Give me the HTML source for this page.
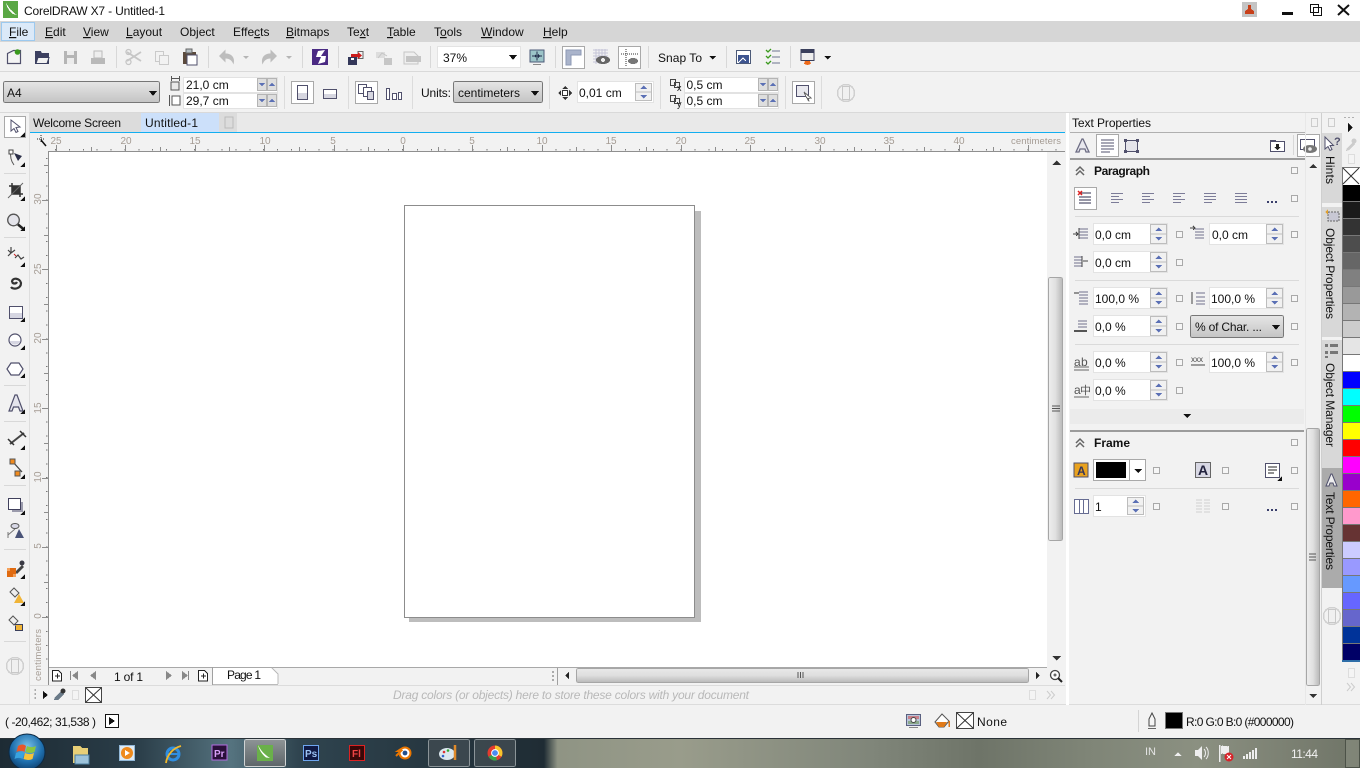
<!DOCTYPE html>
<html><head><meta charset="utf-8"><title>CorelDRAW X7</title>
<style>
html,body{margin:0;padding:0;background:#f2f2f2;overflow:hidden}
svg{display:block;position:absolute;left:0;top:0}
text{font-family:"Liberation Sans",sans-serif;font-size:12px;fill:#111}
.r{font-size:10px;fill:#a59c94}
.b{font-weight:bold}
.u{text-decoration:underline}
</style></head><body>
<svg width="1360" height="768" viewBox="0 0 1360 768" shape-rendering="crispEdges">
<defs>
<linearGradient id="gb" x1="0" y1="0" x2="0" y2="1"><stop offset="0" stop-color="#e6e6e6"/><stop offset="1" stop-color="#c4c4c4"/></linearGradient>
<linearGradient id="gv" x1="0" y1="0" x2="1" y2="0"><stop offset="0" stop-color="#eee"/><stop offset=".5" stop-color="#e0e0e0"/><stop offset="1" stop-color="#b8b8b8"/></linearGradient>
<linearGradient id="gh" x1="0" y1="0" x2="0" y2="1"><stop offset="0" stop-color="#e9e9e9"/><stop offset=".5" stop-color="#dedede"/><stop offset="1" stop-color="#b9b9b9"/></linearGradient>
<linearGradient id="tb" x1="0" y1="0" x2="1" y2="0">
<stop offset="0" stop-color="#1d2b34"/><stop offset=".1" stop-color="#2a3d48"/><stop offset=".17" stop-color="#55737f"/><stop offset=".22" stop-color="#2f444f"/><stop offset=".4" stop-color="#1f2c34"/><stop offset=".41" stop-color="#8f9484"/><stop offset=".5" stop-color="#999c8b"/><stop offset=".64" stop-color="#80867a"/><stop offset=".72" stop-color="#6e7468"/><stop offset=".8" stop-color="#7f8577"/><stop offset=".88" stop-color="#8b9081"/><stop offset="1" stop-color="#6f7467"/></linearGradient>
<radialGradient id="orb" cx=".5" cy=".35" r=".7"><stop offset="0" stop-color="#79c1e8"/><stop offset=".6" stop-color="#1e6fae"/><stop offset="1" stop-color="#0d3a66"/></radialGradient>
<linearGradient id="act" x1="0" y1="0" x2="0" y2="1"><stop offset="0" stop-color="#8e9496"/><stop offset="1" stop-color="#5d6569"/></linearGradient>
<g id="sp"><rect x=".5" y=".5" width="74" height="21" fill="#fff" stroke="#e3e3e3"/><rect x="57.500" y="1.500" width="16" height="19" fill="#f1f1f1" stroke="#bdbdbd"/><path d="M58 11h15" stroke="#bdbdbd"/><path d="M62 8l3.500-3.500 3.500 3.500z" fill="#5b70b5"/><path d="M62 14l3.500 3.500 3.500-3.500z" fill="#5b70b5"/></g>
<g id="cb"><rect x=".5" y=".5" width="6" height="6" fill="#f6f6f6" stroke="#a9a9a9"/></g>
<g id="ss"><rect x=".5" y=".5" width="94" height="15" fill="#fff" stroke="#e2e2e2"/><rect x="74.500" y="1.500" width="9" height="12" fill="#dedede" stroke="#b4b4b4"/><rect x="84.500" y="1.500" width="9" height="12" fill="#dedede" stroke="#b4b4b4"/><path d="M76 6l3 3.500 3-3.500z" fill="#5b70b5"/><path d="M86 9l3-3.500 3 3.500z" fill="#5b70b5"/></g>
<g id="tri"><path d="M0 0h8l-4 5z" fill="#111"/></g>
<g id="corn"><path d="M5 0v5h-5z" fill="#111"/></g>
<g id="ghost"><circle cx="9" cy="9" r="8.500" fill="none" stroke="#d0d0d0" stroke-width="1.500"/><rect x="5.500" y="2.500" width="7" height="13" fill="#f0f0f0" stroke="#c8c8c8"/></g>
<g id="al"><path d="M0 .5h12M0 3.500h8M0 6.500h12M0 9.500h8" stroke="#7c7c98" fill="none"/></g>
</defs>

<!-- chrome backgrounds -->
<rect width="1360" height="768" fill="#f2f2f2"/>
<rect width="1360" height="21" fill="#fff"/>
<rect y="21" width="1360" height="21" fill="#d6d6d6"/>
<rect y="71" width="1360" height="1" fill="#d9d9d9"/>
<rect y="112" width="1360" height="1" fill="#d9d9d9"/>
<rect x="30" y="113" width="1040" height="19" fill="#e9e9e9"/>
<rect x="30" y="113" width="111" height="19" fill="#dcdcdc"/>
<rect x="141" y="113" width="78" height="19" fill="#cce0fa"/>
<rect x="219" y="113" width="18" height="19" fill="#dcdcdc"/>
<rect x="225" y="117" width="8" height="11" fill="#dcdcdc" stroke="#bbb"/>
<rect x="30" y="132" width="1035" height="1" fill="#12aef0"/>
<rect x="29" y="113" width="1" height="592" fill="#dedede"/>

<!-- title -->
<path d="M3 1h15v17H3z" fill="#5aa845"/><path d="M6 3c3 5 6 9 11 12l-4-1C10 12 7 8 6 3z" fill="#fff"/>
<text x="24" y="15" textLength="141">CorelDRAW X7 - Untitled-1</text>
<rect x="1242" y="2" width="15" height="15" fill="#c4c4c4"/><path d="M1248 5h3v4l3 2v3h-9v-3l3-2z" fill="#c8401a"/>
<rect x="1282" y="12" width="11" height="3" fill="#111"/>
<path d="M1310.500 4.500h8v8h-8zM1313.500 7.500h8v8h-8z" fill="#fff" stroke="#111" stroke-width="1.200"/>
<path d="M1338 5l11 10M1349 5l-11 10" stroke="#111" stroke-width="2" shape-rendering="auto"/>

<!-- menu -->
<rect x="1.500" y="22.500" width="33" height="18" fill="#dbe9f8" stroke="#9cc9ef"/>
<text x="9" y="36"><tspan class="u">F</tspan>ile</text>
<text x="45" y="36"><tspan class="u">E</tspan>dit</text>
<text x="83" y="36"><tspan class="u">V</tspan>iew</text>
<text x="126" y="36"><tspan class="u">L</tspan>ayout</text>
<text x="180" y="36">Ob<tspan class="u">j</tspan>ect</text>
<text x="233" y="36">Effe<tspan class="u">c</tspan>ts</text>
<text x="286" y="36"><tspan class="u">B</tspan>itmaps</text>
<text x="347" y="36">Te<tspan class="u">x</tspan>t</text>
<text x="387" y="36"><tspan class="u">T</tspan>able</text>
<text x="434" y="36">T<tspan class="u">o</tspan>ols</text>
<text x="481" y="36"><tspan class="u">W</tspan>indow</text>
<text x="543" y="36"><tspan class="u">H</tspan>elp</text>

<!-- standard toolbar -->
<g fill="#d8d8d8">
<rect x="116" y="46" width="1" height="22"/><rect x="208" y="46" width="1" height="22"/><rect x="302" y="46" width="1" height="22"/><rect x="338" y="46" width="1" height="22"/><rect x="430" y="46" width="1" height="22"/><rect x="555" y="46" width="1" height="22"/><rect x="648" y="46" width="1" height="22"/><rect x="726" y="46" width="1" height="22"/><rect x="790" y="46" width="1" height="22"/>
</g>
<g shape-rendering="auto">
<path d="M7.500 63.500v-10l6-3h7v13z" fill="#f4f4f4" stroke="#50506c" stroke-width="1.200"/><circle cx="17.500" cy="52" r="2.800" fill="#3b9a1e"/>
<path d="M35.500 63.500v-12h5l1 2h7v10z" fill="#3c4060" stroke="#3c4060"/><path d="M36 63.500l2-6h11l-2 6z" fill="#f2f2f2" stroke="#3c4060"/>
<path d="M64 51h13v13H64z" fill="#b5b5b5"/><rect x="67" y="51" width="7" height="4" fill="#ececec"/><rect x="67" y="58" width="7" height="6" fill="#ececec"/>
<path d="M91 58h14v6H91z" fill="#b9b9b9"/><rect x="94" y="51" width="8" height="7" fill="#eee" stroke="#bbb"/>
<path d="M127 52l14 9M141 52l-14 9" stroke="#c6c6c6" stroke-width="1.800" fill="none"/><circle cx="128.500" cy="62" r="2.500" fill="none" stroke="#c6c6c6" stroke-width="1.300"/><circle cx="128.500" cy="52" r="2.500" fill="none" stroke="#c6c6c6" stroke-width="1.300"/>
<rect x="155.500" y="51.500" width="8" height="10" fill="#f2f2f2" stroke="#cacaca"/><rect x="159.500" y="55.500" width="9" height="9" fill="#f2f2f2" stroke="#cacaca"/>
<rect x="183" y="52" width="13" height="12" fill="#5b4a3c"/><rect x="187" y="55" width="10" height="10" fill="#fff" stroke="#50506c"/><rect x="186" y="49" width="6" height="4" fill="#b7c0c4" stroke="#666"/>
<path d="M219 56l6.500-6.500v4c6 0 10 4 8 11-1.500-4-4-6-8-6v4z" fill="#bdbdbd"/>
<path d="M243 56h6l-3 3z" fill="#b5b5b5"/>
<path d="M277 56l-6.500-6.500v4c-6 0-10 4-8 11 1.500-4 4-6 8-6v4z" fill="#bdbdbd"/>
<path d="M286 56h6l-3 3z" fill="#b5b5b5"/>
<rect x="312" y="49" width="16" height="16" fill="#4a2a83"/><path d="M325 50l-7 1-2 6h5l-3 7 7-2 1-6h-5z" fill="#fff"/>
<rect x="348" y="57" width="9" height="8" fill="#34385a"/><rect x="351" y="58" width="3" height="2" fill="#fff"/><path d="M358 51.500h5v7h-5z" fill="#f4f4f4" stroke="#666"/><path d="M351 54h7v-2l4 3.500-4 3.500v-2h-7z" fill="#cc1c1c"/>
<rect x="376" y="52" width="9" height="6" fill="#ddd"/><rect x="384" y="58" width="8" height="7" fill="#c6c6c6"/><path d="M378 58l4-5 5 3" fill="none" stroke="#c4c4c4"/>
<path d="M404 52h10l4 4v8h-14z" fill="#efefef" stroke="#c5c5c5"/><rect x="406" y="56" width="15" height="6" fill="#c5c5c5"/>
</g>
<rect x="437.500" y="46.500" width="83" height="21" fill="#fff" stroke="#e3e3e3"/>
<text x="443" y="62">37%</text><use href="#tri" x="509" y="55"/>
<rect x="530" y="50" width="14" height="12" fill="#9cc4c8" stroke="#4c5a78"/><path d="M532 56h10M537 51.500v9" stroke="#222c4a"/><path d="M534 56l2-2v4zM540 56l-2-2v4z" fill="#222c4a"/><path d="M533 64.500h8" stroke="#888"/>
<rect x="562.500" y="46.500" width="22" height="22" fill="#fff" stroke="#a9a9a9"/><path d="M566 50h15v5h-10v10h-5z" fill="#aab4cb" stroke="#8e9ab5"/>
<g stroke="#c4c4d8"><path d="M593 50h15M593 53h15M593 56h15M593 59h15M593 62h15M596 49v15M599 49v15M602 49v15M605 49v15"/></g><ellipse cx="603" cy="60" rx="7" ry="4" fill="#666"/><circle cx="603" cy="60" r="2" fill="#eee"/>
<rect x="618.500" y="46.500" width="22" height="22" fill="#fff" stroke="#a9a9a9"/><path d="M621 54h18M626 49v17" stroke="#333" stroke-dasharray="1 1"/><ellipse cx="633" cy="61" rx="5" ry="3" fill="#777"/>
<text x="658" y="62" textLength="44">Snap To</text>
<path d="M709 56h7l-3.500 3.500z" fill="#111"/>
<rect x="736.500" y="50.500" width="14" height="13" fill="#fff" stroke="#4c5a78"/><rect x="738" y="55" width="11" height="8" fill="#3e5590"/><path d="M738 63l5-5 3 3" stroke="#fff" fill="none"/>
<path d="M772 51h8M772 57h8M772 63h8" stroke="#6f7490"/><path d="M766 50l2 2 3-3M766 56l2 2 3-3M766 62l2 2 3-3" stroke="#3b9a1e" fill="none" stroke-width="1.300" shape-rendering="auto"/>
<rect x="801" y="49.500" width="13" height="11" fill="#eee" stroke="#3a3f5c"/><rect x="801" y="50" width="13" height="3" fill="#3a3f5c"/><path d="M805 61h5l1 3-3.500 1-3.500-1z" fill="#ee6a1a"/>
<path d="M824 56h7l-3.500 3.500z" fill="#111"/>

<!-- property bar -->
<g fill="#dcdcdc">
<rect x="284" y="76" width="1" height="33"/><rect x="348" y="76" width="1" height="33"/><rect x="412" y="76" width="1" height="33"/><rect x="549" y="76" width="1" height="33"/><rect x="660" y="76" width="1" height="33"/><rect x="785" y="76" width="1" height="33"/><rect x="821" y="76" width="1" height="33"/>
</g>
<rect x="3.500" y="81.500" width="156" height="21" rx="2" fill="url(#gb)" stroke="#777"/>
<text x="7" y="97">A4</text><use href="#tri" x="149" y="91"/>
<rect x="171" y="82" width="8" height="8" fill="#e8e8e8" stroke="#555"/><path d="M171.500 78.500h8M171.500 76v5M179.500 76v5" stroke="#555" fill="none"/>
<rect x="172" y="96" width="8" height="9" fill="#fff" stroke="#555"/><path d="M169.500 95v11" stroke="#555"/>
<use href="#ss" x="183" y="77"/><use href="#ss" x="183" y="93"/>
<text x="186" y="89">21,0 cm</text><text x="186" y="105">29,7 cm</text>
<rect x="291.500" y="81.500" width="22" height="22" fill="#fff" stroke="#a9a9a9"/><rect x="297.500" y="85.500" width="10" height="14" fill="#fff" stroke="#50506c"/><rect x="298" y="93" width="9" height="6" fill="#d6d6e0"/>
<rect x="323.500" y="89.500" width="13" height="9" fill="#fff" stroke="#50506c"/><rect x="324" y="94" width="12" height="4" fill="#d6d6e0"/>
<rect x="355.500" y="81.500" width="22" height="22" fill="#fff" stroke="#a9a9a9"/><rect x="358.500" y="84.500" width="8" height="9" fill="#fff" stroke="#50506c"/><rect x="363.500" y="87.500" width="8" height="9" fill="#fff" stroke="#50506c"/><rect x="367.500" y="91.500" width="6" height="8" fill="#d6d6e0" stroke="#50506c"/>
<rect x="386.500" y="88.500" width="3" height="11" fill="#fff" stroke="#50506c"/><rect x="392.500" y="93.500" width="4" height="6" fill="#fff" stroke="#50506c"/><rect x="398.500" y="92.500" width="3" height="7" fill="#fff" stroke="#50506c"/>
<text x="421" y="97" textLength="30">Units:</text>
<rect x="453.500" y="81.500" width="89" height="21" rx="2" fill="url(#gb)" stroke="#777"/>
<text x="458" y="97" textLength="62">centimeters</text><use href="#tri" x="531" y="91"/>
<path d="M565 86l3 3h-6zM565 100l3-3h-6zM558 93l3-3v6zM572 93l-3-3v6z" fill="#333"/><rect x="562.500" y="90.500" width="5" height="5" fill="#fff" stroke="#333"/>
<rect x="577.500" y="81.500" width="76" height="21" fill="#fff" stroke="#e3e3e3"/><rect x="635.500" y="83.500" width="16" height="17" fill="#f1f1f1" stroke="#bdbdbd"/><path d="M636 92h15" stroke="#bdbdbd"/><path d="M640 89l3.500-3.500 3.500 3.500zM640 95l3.500 3.500 3.500-3.500z" fill="#5b70b5"/>
<text x="579" y="97">0,01 cm</text>
<rect x="670.500" y="79.500" width="5" height="6" fill="none" stroke="#444"/><rect x="674.500" y="82.500" width="5" height="5" fill="none" stroke="#444"/>
<rect x="670.500" y="95.500" width="5" height="6" fill="none" stroke="#444"/><rect x="674.500" y="98.500" width="5" height="5" fill="none" stroke="#444"/>
<text x="677" y="91" style="font-size:9px">x</text><text x="677" y="107" style="font-size:9px">y</text>
<use href="#ss" x="684" y="77"/><use href="#ss" x="684" y="93"/>
<text x="686.500" y="89">0,5 cm</text><text x="686.500" y="105">0,5 cm</text>
<rect x="792.500" y="81.500" width="22" height="22" fill="#fff" stroke="#a9a9a9"/><rect x="796.500" y="85.500" width="12" height="11" fill="#e8e8ee" stroke="#50506c"/><path d="M804 92l7 6-3 .5 1 3-3-5z" fill="#fff" stroke="#666"/>
<use href="#ghost" x="837" y="84"/>

<!-- tabs -->
<text x="33" y="127" textLength="88">Welcome Screen</text>
<text x="145" y="127" textLength="53" fill="#223">Untitled-1</text>

<!-- rulers -->
<rect x="30" y="133" width="1035" height="18" fill="#f2f2f2"/>
<rect x="30" y="133" width="18" height="535" fill="#f2f2f2"/>
<rect x="48" y="151" width="999" height="516" fill="#fff"/>
<rect x="48" y="151" width="1017" height="1" fill="#8f8f8f"/>
<rect x="48" y="151" width="1" height="534" fill="#8f8f8f"/>
<path d="M403 149.500H54" stroke="#777" stroke-width="1.500" stroke-dasharray="1 12.880"/>
<path d="M403 149.500H1060" stroke="#777" stroke-width="1.500" stroke-dasharray="1 12.880"/>
<path d="M46.500 617V155" stroke="#777" stroke-width="1.500" stroke-dasharray="1 12.880"/>
<path d="M46.500 617V662" stroke="#777" stroke-width="1.500" stroke-dasharray="1 12.880"/>
<g fill="#8d8d8d">
<rect x="56" y="145" width="1" height="6"/><rect x="125" y="145" width="1" height="6"/><rect x="195" y="145" width="1" height="6"/><rect x="264" y="145" width="1" height="6"/><rect x="334" y="145" width="1" height="6"/><rect x="403" y="145" width="1" height="6"/><rect x="472" y="145" width="1" height="6"/><rect x="542" y="145" width="1" height="6"/><rect x="611" y="145" width="1" height="6"/><rect x="681" y="145" width="1" height="6"/><rect x="750" y="145" width="1" height="6"/><rect x="820" y="145" width="1" height="6"/><rect x="889" y="145" width="1" height="6"/><rect x="959" y="145" width="1" height="6"/><rect x="1028" y="145" width="1" height="6"/>
<rect x="91" y="147" width="1" height="4"/><rect x="160" y="147" width="1" height="4"/><rect x="229" y="147" width="1" height="4"/><rect x="299" y="147" width="1" height="4"/><rect x="368" y="147" width="1" height="4"/><rect x="438" y="147" width="1" height="4"/><rect x="507" y="147" width="1" height="4"/><rect x="576" y="147" width="1" height="4"/><rect x="646" y="147" width="1" height="4"/><rect x="715" y="147" width="1" height="4"/><rect x="785" y="147" width="1" height="4"/><rect x="854" y="147" width="1" height="4"/><rect x="924" y="147" width="1" height="4"/><rect x="993" y="147" width="1" height="4"/>
<rect x="42" y="200" width="6" height="1"/><rect x="42" y="269" width="6" height="1"/><rect x="42" y="339" width="6" height="1"/><rect x="42" y="408" width="6" height="1"/><rect x="42" y="478" width="6" height="1"/><rect x="42" y="547" width="6" height="1"/><rect x="42" y="617" width="6" height="1"/>
<rect x="44" y="165" width="4" height="1"/><rect x="44" y="235" width="4" height="1"/><rect x="44" y="304" width="4" height="1"/><rect x="44" y="373" width="4" height="1"/><rect x="44" y="443" width="4" height="1"/><rect x="44" y="512" width="4" height="1"/><rect x="44" y="582" width="4" height="1"/>
</g>
<g text-anchor="middle">
<text class="r" x="56" y="144">25</text><text class="r" x="126" y="144">20</text><text class="r" x="195" y="144">15</text><text class="r" x="265" y="144">10</text><text class="r" x="333" y="144">5</text><text class="r" x="403" y="144">0</text><text class="r" x="472" y="144">5</text><text class="r" x="542" y="144">10</text><text class="r" x="611" y="144">15</text><text class="r" x="681" y="144">20</text><text class="r" x="750" y="144">25</text><text class="r" x="820" y="144">30</text><text class="r" x="889" y="144">35</text><text class="r" x="959" y="144">40</text>
</g>
<text class="r" x="1011" y="144" textLength="50" style="font-size:9.500px">centimeters</text>
<g text-anchor="middle">
<text class="r" transform="translate(41 199) rotate(-90)">30</text><text class="r" transform="translate(41 269) rotate(-90)">25</text><text class="r" transform="translate(41 338) rotate(-90)">20</text><text class="r" transform="translate(41 408) rotate(-90)">15</text><text class="r" transform="translate(41 477) rotate(-90)">10</text><text class="r" transform="translate(41 546) rotate(-90)">5</text><text class="r" transform="translate(41 616) rotate(-90)">0</text>
</g>
<text class="r" transform="translate(41 681) rotate(-90)" textLength="52" style="font-size:9.500px">centimeters</text>
<path d="M37 139h8M41 135v8" stroke="#222" stroke-dasharray="1 1"/><path d="M41 140l5 6" stroke="#111" stroke-width="1.500" shape-rendering="auto"/>

<!-- page -->
<rect x="409" y="211" width="292" height="411" fill="#bdbdbd"/>
<rect x="404.500" y="205.500" width="290" height="412" fill="#fff" stroke="#8c8c8c"/>

<!-- canvas v-scroll -->
<rect x="1047" y="152" width="18" height="516" fill="#f2f2f2"/>
<path d="M1052 165l4.500-4.500 4.500 4.500z" fill="#333"/>
<rect x="1048.500" y="277.500" width="14" height="263" rx="2" fill="url(#gv)" stroke="#a6a6a6"/>
<path d="M1052 406h8M1052 408.500h8M1052 411h8" stroke="#555"/>
<path d="M1052 656l4.500 4.500 4.500-4.500z" fill="#333"/>

<!-- bottom nav -->
<rect x="49" y="668" width="1016" height="17" fill="#f2f2f2"/>
<rect x="49" y="667" width="998" height="1" fill="#a8a8a8"/>
<path d="M52.500 670.500h6l3 3v7.500h-9z" fill="#fff" stroke="#222"/><path d="M55 676h5M57.500 673.500v5" stroke="#222"/>
<rect x="70" y="671" width="1" height="9" fill="#888"/><path d="M78 671v9l-6-4.500z" fill="#888"/>
<path d="M96 671v9l-6-4.500z" fill="#888"/>
<text x="114" y="681" textLength="29">1 of 1</text>
<path d="M166 671v9l6-4.500z" fill="#888"/>
<path d="M182 671v9l6-4.500z" fill="#888"/><rect x="188" y="671" width="1" height="9" fill="#888"/>
<path d="M198.500 670.500h6l3 3v7.500h-9z" fill="#fff" stroke="#222"/><path d="M201 676h5M203.500 673.500v5" stroke="#222"/>
<rect x="212" y="667" width="1" height="18" fill="#a0a0a0"/>
<path d="M213 668h59l6 6v10h-65z" fill="#fff"/><path d="M272 668l6 6v10" fill="none" stroke="#bbb"/><path d="M213 684.500h65" stroke="#bbb"/>
<text x="227" y="679" textLength="34">Page 1</text>
<path d="M553 671v2M553 675v2M553 679v2" stroke="#aaa" stroke-width="2"/>
<rect x="557" y="668" width="1" height="17" fill="#a0a0a0"/>
<path d="M569 672v7l-4-3.500z" fill="#222"/>
<rect x="576.500" y="668.500" width="452" height="14" rx="2" fill="url(#gh)" stroke="#a6a6a6"/>
<path d="M798 672v6M800.500 672v6M803 672v6" stroke="#555"/>
<path d="M1036 672v7l4-3.500z" fill="#222"/>
<circle cx="1055" cy="675" r="4.500" fill="#fff" stroke="#444" stroke-width="1.300" shape-rendering="auto"/><circle cx="1055" cy="675" r="1.500" fill="#666" shape-rendering="auto"/><path d="M1058 678l4 4" stroke="#222" stroke-width="2" shape-rendering="auto"/>

<!-- doc palette -->
<rect x="30" y="685" width="1035" height="1" fill="#dcdcdc"/>
<rect y="704" width="1360" height="1" fill="#dcdcdc"/>
<path d="M35 689v2M35 693v2M35 697v2" stroke="#aaa" stroke-width="1.500"/>
<path d="M43 691v8l5-4z" fill="#111"/>
<path d="M54 700l1-3 6-6 3 3-6 6z" fill="#6a7a88"/><circle cx="63" cy="691" r="2.500" fill="#333" shape-rendering="auto"/>
<rect x="72.500" y="690.500" width="6" height="9" fill="#f4f4f4" stroke="#ddd"/>
<rect x="85.500" y="687.500" width="16" height="15" fill="#fff" stroke="#444"/><path d="M86 688l15 14M101 688l-15 14" stroke="#333" shape-rendering="auto"/>
<text x="393" y="699" textLength="356" font-style="italic" style="fill:#b8b8b8">Drag colors (or objects) here to store these colors with your document</text>
<rect x="1029.500" y="690.500" width="6" height="9" fill="#f4f4f4" stroke="#ddd"/>
<path d="M1047 691l3.500 4-3.500 4M1051 691l3.500 4-3.500 4" fill="none" stroke="#ccc" shape-rendering="auto"/>

<!-- white gutter -->
<rect x="1066" y="113" width="3" height="592" fill="#fff"/>

<!-- status -->
<text x="5" y="726" textLength="91">( -20,462; 31,538 )</text>
<rect x="105.500" y="714.500" width="13" height="13" fill="#fff" stroke="#111"/><path d="M109 717v8l6-4z" fill="#111"/>
<rect x="906.500" y="714.500" width="14" height="11" fill="#b8c4d8" stroke="#5a6080"/><rect x="908" y="716" width="11" height="3" fill="#c9808a"/><rect x="908" y="721" width="11" height="3" fill="#8aa88a"/><circle cx="913.500" cy="720" r="2.500" fill="#fff" stroke="#444" shape-rendering="auto"/><path d="M909 727.500h9" stroke="#888"/>
<path d="M935 722l7-8 7 7-5 6h-5z" fill="#fff" stroke="#555" shape-rendering="auto"/><path d="M936 722h11l-3 5h-5z" fill="#e07a1a" shape-rendering="auto"/><path d="M949 721v6" stroke="#e07a1a" stroke-width="1.500"/>
<rect x="956.500" y="712.500" width="17" height="16" fill="#fff" stroke="#444"/><path d="M957 713l16 15M973 713l-16 15" stroke="#333" shape-rendering="auto"/>
<text x="977" y="726" textLength="30">None</text>
<rect x="1138" y="710" width="1" height="22" fill="#d4d4d4"/>
<path d="M1152 713l3 6v7h-6v-7z" fill="#f4f4f4" stroke="#444" shape-rendering="auto"/><path d="M1148 728.500h8" stroke="#666"/>
<rect x="1165.500" y="712.500" width="17" height="16" fill="#000" stroke="#777"/>
<text x="1186" y="726" textLength="108">R:0 G:0 B:0 (#000000)</text>

<!-- left toolbox -->
<rect x="4.500" y="116.500" width="21" height="21" fill="#fff" stroke="#a9a9a9"/>
<g shape-rendering="auto">
<path d="M11 120v11l3-2.500 2 4 2-1-2-4 4-.5z" fill="#fff" stroke="#50506c"/>
<path d="M11 151c-1 5 0 10 3 14" fill="none" stroke="#555"/><rect x="9" y="150" width="4" height="4" fill="#fff" stroke="#444"/><path d="M14 153l8 3-4 5z" fill="#2b2f48"/>
<path d="M12 183v11h11M9 186h11v11" fill="none" stroke="#333" stroke-width="1.500"/><rect x="12" y="186" width="8" height="8" fill="#333"/><path d="M8 198l15-15" stroke="#666"/>
<circle cx="13.500" cy="220" r="5.800" fill="#e4e4ea" stroke="#555" stroke-width="1.300"/><path d="M18 224.500l6 5" stroke="#222" stroke-width="2.500"/>
<path d="M8 250l3 3M11 253l-3 3M11 247v6M11 253l4-3M15 258l3-3 3 4 3-2" fill="none" stroke="#444" stroke-width="1.200"/><path d="M14 254l2 2" stroke="#c22"/>
<path d="M12 282c0-5 8-4 9 1 0 6-8 7-10 4M12 282c1 2 4 2 5 0" fill="none" stroke="#333" stroke-width="2.200"/>
</g>
<rect x="9.500" y="306.500" width="13" height="12" fill="#fff" stroke="#50506c"/><rect x="10" y="313" width="12" height="5" fill="#d6d6e2"/>
<g shape-rendering="auto">
<circle cx="15" cy="340" r="6" fill="#fff" stroke="#50506c" stroke-width="1.200"/><path d="M9.500 341h11a6 6 0 0 1-11 0z" fill="#d6d6e2"/>
<path d="M11 363h8l4 6-4 6h-8l-4-6z" fill="#fff" stroke="#50506c" stroke-width="1.200"/>
<path d="M15 395l-6 16h3l1.500-4h5l1.500 4h3l-6-16z" fill="#e4e4ec" stroke="#50506c" stroke-width="1.200"/>
<path d="M10 444l14-11" stroke="#444" stroke-width="2"/><path d="M8 439l6 6M20 431l6 6" stroke="#333" stroke-width="1.500"/>
<path d="M13 462l9 10" stroke="#444" stroke-width="1.300"/>
</g>
<rect x="10" y="459" width="5" height="5" fill="#f08a1e" stroke="#555"/><rect x="15" y="471" width="5" height="5" fill="#f08a1e" stroke="#555"/>
<rect x="8.500" y="498.500" width="12" height="11" fill="#fff" stroke="#40405c"/><path d="M21 502h2v10H12v-2h9z" fill="#9b9bac"/>
<g shape-rendering="auto">
<ellipse cx="15" cy="526" rx="4" ry="2.500" fill="#d8d8e6" stroke="#555"/><path d="M8 535l7-6M8 532v6" stroke="#777" fill="none"/><path d="M19 529l-4 9h9z" fill="#4a5478"/>
<path d="M15 572l7-7 2 2-7 7z" fill="#444"/><circle cx="22" cy="563" r="2.500" fill="#3a3a44"/>
</g>
<rect x="7" y="568" width="9" height="9" fill="#e06a10"/><rect x="7" y="568" width="3" height="3" fill="#f4a05a"/><rect x="13" y="574" width="3" height="3" fill="#f4a05a"/>
<g shape-rendering="auto">
<path d="M10 592l4-4 5 5-4 4z" fill="#eee" stroke="#555"/><path d="M19 594l-5 9h10z" fill="#f0b436"/>
<path d="M9 620l4-4 5 5-4 4z" fill="#eee" stroke="#555"/>
</g>
<path d="M14.500 624.500h8v6h-7v-5" fill="#f0b436" stroke="#3a3f5c"/>
<g fill="#111"><use href="#corn" x="20" y="132"/><use href="#corn" x="20" y="162"/><use href="#corn" x="20" y="196"/><use href="#corn" x="20" y="226"/><use href="#corn" x="20" y="262"/><use href="#corn" x="20" y="317"/><use href="#corn" x="20" y="345"/><use href="#corn" x="20" y="373"/><use href="#corn" x="20" y="409"/><use href="#corn" x="20" y="445"/><use href="#corn" x="20" y="474"/><use href="#corn" x="20" y="510"/><use href="#corn" x="20" y="574"/><use href="#corn" x="20" y="601"/></g>
<g fill="#d8d8d8"><rect x="4" y="173" width="22" height="1"/><rect x="4" y="237" width="22" height="1"/><rect x="4" y="385" width="22" height="1"/><rect x="4" y="421" width="22" height="1"/><rect x="4" y="485" width="22" height="1"/><rect x="4" y="549" width="22" height="1"/><rect x="4" y="641" width="22" height="1"/></g>
<use href="#ghost" x="6" y="657"/>

<!-- docker -->
<text x="1072" y="127" textLength="79">Text Properties</text>
<rect x="1311.500" y="118.500" width="6" height="8" fill="#f2f2f2" stroke="#ccc"/><rect x="1328.500" y="118.500" width="6" height="8" fill="#f2f2f2" stroke="#ccc"/>
<rect x="1070" y="132" width="236" height="1" fill="#b0b0b0"/>
<rect x="1070" y="158" width="235" height="2" fill="#9c9c9c"/>
<path d="M1082 139l-6 13h3l1-3h5l1 3h3l-6-13z" fill="#e8e8ee" stroke="#6d6d84" stroke-width="1.300" shape-rendering="auto"/>
<rect x="1096.500" y="134.500" width="22" height="22" fill="#fff" stroke="#a9a9a9"/><path d="M1101 140h13M1101 143h13M1101 146h13M1101 149h13M1101 152h9" stroke="#50506c"/>
<rect x="1125.500" y="140.500" width="12" height="11" fill="#e4e4ea" stroke="#50506c"/><g fill="#50506c"><rect x="1124" y="139" width="3" height="3"/><rect x="1136" y="139" width="3" height="3"/><rect x="1124" y="150" width="3" height="3"/><rect x="1136" y="150" width="3" height="3"/></g>
<path d="M1270.500 141.500h14v10h-14z" fill="#fff" stroke="#50506c"/><path d="M1270 140h6v2h-6z" fill="#50506c"/><path d="M1276 144h3v3h2l-3.500 3-3.500-3h2z" fill="#222"/>
<rect x="1293" y="135" width="1" height="20" fill="#d8d8d8"/>
<rect x="1297.500" y="134.500" width="22" height="22" fill="#fff" stroke="#a9a9a9"/><rect x="1300.500" y="139.500" width="14" height="10" fill="#fff" stroke="#50506c"/><ellipse cx="1310" cy="149" rx="7" ry="4" fill="#777" shape-rendering="auto"/><circle cx="1310" cy="149" r="1.800" fill="#eee" shape-rendering="auto"/>

<!-- section chevron -->
<path d="M1076 171l4-4 4 4M1076 175l4-4 4 4" fill="none" stroke="#666" stroke-width="1.500" shape-rendering="auto"/>
<text class="b" x="1094" y="175" textLength="56">Paragraph</text>
<use href="#cb" x="1291" y="167"/>
<rect x="1074.500" y="187.500" width="22" height="22" fill="#fff" stroke="#a9a9a9"/><path d="M1079 193h12M1079 197h12M1079 200h12M1079 203h12" stroke="#2e2e4e"/><path d="M1078 191l4 4M1082 191l-4 4" stroke="#d22" stroke-width="1.500" shape-rendering="auto"/>
<use href="#al" x="1111" y="193"/><use href="#al" x="1142" y="193"/><use href="#al" x="1173" y="193"/>
<path d="M1204 193.500h12M1204 196.500h12M1204 199.500h12M1204 202.500h8" stroke="#7c7c98"/>
<path d="M1235 193.500h12M1235 196.500h12M1235 199.500h12M1235 202.500h12" stroke="#7c7c98"/>
<path d="M1267 201h2v2h-2zM1271 201h2v2h-2zM1275 201h2v2h-2z" fill="#3a3f6c"/>
<use href="#cb" x="1291" y="195"/>
<rect x="1075" y="216" width="224" height="1" fill="#dadada"/>
<rect x="1075" y="280" width="224" height="1" fill="#dadada"/>
<rect x="1075" y="344" width="224" height="1" fill="#dadada"/>

<!-- fields -->
<use href="#sp" x="1093" y="223"/><use href="#sp" x="1209" y="223"/>
<use href="#sp" x="1093" y="251"/>
<use href="#sp" x="1093" y="287"/><use href="#sp" x="1209" y="287"/>
<use href="#sp" x="1093" y="315"/>
<use href="#sp" x="1093" y="351"/><use href="#sp" x="1209" y="351"/>
<use href="#sp" x="1093" y="379"/>
<text x="1095" y="239">0,0 cm</text><text x="1212" y="239">0,0 cm</text><text x="1095" y="267">0,0 cm</text>
<text x="1095" y="303">100,0 %</text><text x="1211" y="303">100,0 %</text><text x="1095" y="331">0,0 %</text>
<text x="1095" y="367">0,0 %</text><text x="1211" y="367">100,0 %</text><text x="1095" y="395">0,0 %</text>
<rect x="1190.500" y="315.500" width="93" height="22" rx="2" fill="url(#gb)" stroke="#777"/>
<text x="1195" y="331" textLength="67">% of Char. ...</text><use href="#tri" x="1272" y="325"/>
<use href="#cb" x="1176" y="231"/><use href="#cb" x="1291" y="231"/><use href="#cb" x="1176" y="259"/><use href="#cb" x="1176" y="295"/><use href="#cb" x="1291" y="295"/><use href="#cb" x="1176" y="323"/><use href="#cb" x="1291" y="323"/><use href="#cb" x="1176" y="359"/><use href="#cb" x="1291" y="359"/><use href="#cb" x="1176" y="387"/>
<path d="M1079 229h9M1079 232h9M1079 235h9M1079 238h9" stroke="#70708c"/><path d="M1073 234h5M1076 232l2 2-2 2" fill="none" stroke="#444"/><path d="M1079 228v11" stroke="#444"/>
<path d="M1195 229h9M1195 232h9M1195 235h9M1195 238h9" stroke="#70708c"/><path d="M1190 228h5M1193 226l2 2-2 2" fill="none" stroke="#444"/>
<path d="M1074 257h8M1074 260h8M1074 263h8M1074 266h8" stroke="#70708c"/><path d="M1082 256v11" stroke="#444"/><path d="M1083 261h5" stroke="#444"/>
<path d="M1079 292h9M1079 295h9M1079 298h9M1079 301h9M1079 304h9" stroke="#70708c"/><path d="M1074 293h5" stroke="#333"/>
<path d="M1196 293h9M1196 297h9M1196 301h9M1196 304h9" stroke="#70708c"/><path d="M1192 292v12" stroke="#444"/>
<path d="M1078 321h9M1078 324h9M1078 327h9" stroke="#70708c"/><path d="M1074 331h13" stroke="#555" stroke-width="2"/>
<text x="1074" y="366" style="font-size:12px;fill:#555">a</text><text x="1081" y="366" style="font-size:12px;fill:#555">b</text><path d="M1074 367h15M1074 370h15" stroke="#666"/>
<text x="1191" y="362" style="font-size:8px;fill:#444">xxx</text><path d="M1191 365h14" stroke="#444"/>
<text x="1074" y="394" style="font-size:12px;fill:#555">a</text><text x="1080" y="394" style="font-size:11px;fill:#555;font-family:'Liberation Sans','Noto Sans CJK SC',sans-serif">中</text><path d="M1074 397h15" stroke="#666"/>
<rect x="1070" y="409" width="234" height="15" fill="#ebebeb"/>
<path d="M1183 414h8l-4 4z" fill="#111"/>
<rect x="1070" y="430" width="234" height="2" fill="#9c9c9c"/>
<path d="M1076 443l4-4 4 4M1076 447l4-4 4 4" fill="none" stroke="#666" stroke-width="1.500" shape-rendering="auto"/>
<text class="b" x="1094" y="447">Frame</text>
<use href="#cb" x="1291" y="439"/>
<rect x="1074" y="463" width="14" height="14" fill="#e9a21f" stroke="#50506c"/><text class="b" x="1077" y="475" style="fill:#36365a">A</text>
<rect x="1093.500" y="459.500" width="52" height="21" fill="#fff" stroke="#a9a9a9"/><rect x="1096" y="462" width="30" height="16" fill="#000"/><rect x="1129" y="460" width="1" height="21" fill="#a9a9a9"/><path d="M1134 469h8l-4 4z" fill="#111"/>
<use href="#cb" x="1153" y="467"/><use href="#cb" x="1222" y="467"/><use href="#cb" x="1291" y="467"/>
<rect x="1195.500" y="462.500" width="15" height="15" fill="#d8d8e4" stroke="#666"/><text class="b" x="1198" y="475" style="font-size:14px;fill:#22223e">A</text>
<rect x="1265.500" y="463.500" width="14" height="14" fill="#fff" stroke="#50506c"/><path d="M1268 467h9M1268 470h9M1268 473h6" stroke="#222"/><path d="M1282 476v5h-5z" fill="#111"/>
<rect x="1075" y="488" width="224" height="1" fill="#dadada"/>
<rect x="1074.500" y="499.500" width="14" height="14" fill="#fff" stroke="#666c92"/><path d="M1079.500 499v15M1083.500 499v15" stroke="#666c92"/>
<rect x="1093.500" y="495.500" width="52" height="21" fill="#fff" stroke="#e3e3e3"/><rect x="1127.500" y="497.500" width="16" height="17" fill="#f1f1f1" stroke="#bdbdbd"/><path d="M1128 506h15" stroke="#bdbdbd"/><path d="M1132 503l3.500-3.500 3.500 3.500zM1132 509l3.500 3.500 3.500-3.500z" fill="#5b70b5"/>
<text x="1095" y="511">1</text>
<use href="#cb" x="1153" y="503"/><use href="#cb" x="1222" y="503"/><use href="#cb" x="1291" y="503"/>
<path d="M1196 500h6M1196 503h6M1196 506h6M1196 509h6M1196 512h6M1204 500h6M1204 503h6M1204 506h6M1204 509h6M1204 512h6" stroke="#d0d0d0"/>
<path d="M1267 509h2v2h-2zM1271 509h2v2h-2zM1275 509h2v2h-2z" fill="#3a3f6c"/>

<!-- docker scrollbar -->
<path d="M1309 168l4-4 4 4z" fill="#333"/>
<rect x="1306.500" y="428.500" width="13" height="257" rx="2" fill="url(#gv)" stroke="#a6a6a6"/>
<path d="M1309 554h7M1309 557h7M1309 560h7" stroke="#555"/>
<path d="M1309 694h8l-4 4z" fill="#333"/>
<rect x="1305" y="113" width="1" height="592" fill="#e8e8e8"/>

<!-- vertical tabs -->
<rect x="1321" y="113" width="1" height="592" fill="#cfcfcf"/>
<rect x="1322" y="133" width="20" height="70" fill="#d8d8d8"/>
<rect x="1322" y="207" width="20" height="130" fill="#d8d8d8"/>
<rect x="1322" y="340" width="20" height="128" fill="#d8d8d8"/>
<rect x="1322" y="468" width="20" height="120" fill="#ababab"/>
<text transform="translate(1326 156) rotate(90)" textLength="28">Hints</text>
<text transform="translate(1326 228) rotate(90)" textLength="91">Object Properties</text>
<text transform="translate(1326 363) rotate(90)" textLength="84">Object Manager</text>
<text transform="translate(1326 492) rotate(90)" textLength="78">Text Properties</text>
<path d="M1325 137v12l3-2.500 2 4 2-1-2-4h3.500z" fill="#fff" stroke="#50506c" shape-rendering="auto"/><text class="b" x="1334" y="145" style="font-size:11px;fill:#50506c">?</text>
<rect x="1328" y="212" width="11" height="9" fill="#c8c8d4" stroke="#666" stroke-dasharray="2 1"/><path d="M1325 212l3-3v6z" fill="#e0a030"/>
<path d="M1325 344h3v3h-3zM1330 344h8v3h-8zM1325 351h3v3h-3zM1330 351h8v3h-8zM1325 356h3v2h-3z" fill="#777"/>
<path d="M1331 474l-5 12h3l1-3h3l1 3h3l-5-12z" fill="#eee" stroke="#50506c" shape-rendering="auto"/>
<use href="#ghost" x="1323" y="607"/>

<!-- color palette -->
<path d="M1344 117.500h2M1348 117.500h2M1352 117.500h2" stroke="#b0b0b0"/>
<path d="M1348 123v9l5-4.500z" fill="#111"/>
<path d="M1346 151l1-3 6-6 2 2-6 6z" fill="#ccc"/><circle cx="1354" cy="141" r="2.500" fill="#ccc" shape-rendering="auto"/>
<rect x="1348.500" y="154.500" width="6" height="9" fill="#f4f4f4" stroke="#ddd"/>
<rect x="1342" y="167" width="18" height="494" fill="#777"/>
<rect x="1343" y="168" width="17" height="17" fill="#fff"/><path d="M1343 168l16 16M1359 168l-16 16" stroke="#333" shape-rendering="auto"/>
<g>
<rect x="1343" y="185" width="17" height="16" fill="#000"/><rect x="1343" y="202" width="17" height="16" fill="#1a1a1a"/><rect x="1343" y="219" width="17" height="16" fill="#333"/><rect x="1343" y="236" width="17" height="16" fill="#4d4d4d"/><rect x="1343" y="253" width="17" height="16" fill="#666"/><rect x="1343" y="270" width="17" height="16" fill="#808080"/><rect x="1343" y="287" width="17" height="16" fill="#999"/><rect x="1343" y="304" width="17" height="16" fill="#b3b3b3"/><rect x="1343" y="321" width="17" height="16" fill="#ccc"/><rect x="1343" y="338" width="17" height="16" fill="#e5e5e5"/><rect x="1343" y="355" width="17" height="16" fill="#fff"/><rect x="1343" y="372" width="17" height="16" fill="#00f"/><rect x="1343" y="389" width="17" height="16" fill="#0ff"/><rect x="1343" y="406" width="17" height="16" fill="#0f0"/><rect x="1343" y="423" width="17" height="16" fill="#ff0"/><rect x="1343" y="440" width="17" height="16" fill="#f00"/><rect x="1343" y="457" width="17" height="16" fill="#f0f"/><rect x="1343" y="474" width="17" height="16" fill="#90c"/><rect x="1343" y="491" width="17" height="16" fill="#f60"/><rect x="1343" y="508" width="17" height="16" fill="#f9c"/><rect x="1343" y="525" width="17" height="16" fill="#633"/><rect x="1343" y="542" width="17" height="16" fill="#ccf"/><rect x="1343" y="559" width="17" height="16" fill="#99f"/><rect x="1343" y="576" width="17" height="16" fill="#69f"/><rect x="1343" y="593" width="17" height="16" fill="#66f"/><rect x="1343" y="610" width="17" height="16" fill="#66c"/><rect x="1343" y="627" width="17" height="16" fill="#039"/><rect x="1343" y="644" width="17" height="16" fill="#006"/>
</g>
<rect x="1342" y="660" width="18" height="2" fill="#2e6ea8"/>
<rect x="1348.500" y="668.500" width="6" height="9" fill="#f4f4f4" stroke="#ddd"/>
<path d="M1347 683l3.500 4-3.500 4M1351 683l3.500 4-3.500 4" fill="none" stroke="#ccc" shape-rendering="auto"/>

<!-- taskbar -->
<rect y="738" width="1360" height="30" fill="url(#tb)"/>
<rect y="738" width="1360" height="1" fill="#2a3238"/>
<rect x="1345.500" y="739.500" width="14" height="28" fill="#8b9082" fill-opacity=".6" stroke="#4c5248"/>
<g shape-rendering="auto">
<circle cx="27" cy="752" r="18" fill="url(#orb)" stroke="#0d2a44"/>
<path d="M18 746c3-2 6-2 8 0l-1.500 6c-2-1.500-5-1.500-8 0z" fill="#e8562a"/>
<path d="M27 746c3 1.500 6 1.500 9 0l-1.500 6c-3 1.500-6 1-9 0z" fill="#8bc63f"/>
<path d="M16 753c3-1.500 6-1.500 8 0l-1.500 6c-2-1.500-5-1.500-8 0z" fill="#39a3e0"/>
<path d="M25 753c3 1.500 6 1.500 9 0l-1.500 6c-3 1.500-6 1-9 0z" fill="#f6c338"/>
</g>
<path d="M73 746h7l2 2h6v15H73z" fill="#e8cf76"/><path d="M75 755h14v9H75z" fill="#9dc3da" stroke="#4c7fa0"/>
<rect x="119.500" y="745.500" width="15" height="15" fill="#dfeaf2" stroke="#92b8d8"/><circle cx="127" cy="753" r="6" fill="#ef8a1c" shape-rendering="auto"/><path d="M125 750v6l5-3z" fill="#fff"/>
<g shape-rendering="auto"><circle cx="173" cy="754" r="6" fill="none" stroke="#2f8ee0" stroke-width="3"/><path d="M168 754h11" stroke="#2f8ee0" stroke-width="2"/><path d="M166 763c1-8 7-15 15-17" fill="none" stroke="#f2b92a" stroke-width="1.800"/></g>
<rect x="212" y="745" width="15" height="15" fill="#2a0f3a" stroke="#b26be0"/><text x="214" y="757" style="font-size:10px;font-weight:bold;fill:#d8a0f8">Pr</text>
<rect x="244.500" y="739.500" width="41" height="27" rx="2" fill="url(#act)" stroke="#cfd3d4"/>
<rect x="257" y="745" width="16" height="16" fill="#6ab04a"/><path d="M258 745c3 6 7 10 12 13l-4-.5c-4-3-7-8-8-12.500z" fill="#fff" shape-rendering="auto"/>
<rect x="303.500" y="745.500" width="15" height="15" fill="#101a44" stroke="#6ea6f0"/><text x="305" y="757" style="font-size:10px;font-weight:bold;fill:#9cc4f4">Ps</text>
<rect x="349.500" y="745.500" width="15" height="15" fill="#3a0808" stroke="#d22"/><text x="352" y="757" style="font-size:10px;font-weight:bold;fill:#ee4444">Fl</text>
<g shape-rendering="auto"><circle cx="405" cy="753" r="5.500" fill="#fff" stroke="#ea7600" stroke-width="2"/><circle cx="405" cy="753" r="2.400" fill="#234f8a"/><path d="M396 756l5-5-3 0 3-2" fill="none" stroke="#ea7600" stroke-width="2"/></g>
<rect x="428.500" y="739.500" width="41" height="27" rx="2" fill="#3e4950" fill-opacity=".9" stroke="#8b9498"/>
<g shape-rendering="auto"><ellipse cx="447" cy="754" rx="8" ry="6" fill="#dce8ef"/><circle cx="444" cy="752" r="1.300" fill="#d33"/><circle cx="448" cy="750.500" r="1.300" fill="#3a3"/><circle cx="443" cy="756" r="1.300" fill="#36c"/><path d="M455 745v15" stroke="#e08a2a" stroke-width="2.500"/></g>
<rect x="474.500" y="739.500" width="41" height="27" rx="2" fill="#3e4950" fill-opacity=".9" stroke="#8b9498"/>
<g shape-rendering="auto"><circle cx="495" cy="753" r="7.500" fill="#e33b2e"/><path d="M495 753l-6.500 3.700A7.500 7.500 0 0 0 497 760.300z" fill="#3aa34a"/><path d="M495 745.500a7.500 7.500 0 0 1 6.500 11.200L495 753v-7.500z" fill="#f8c52c"/><circle cx="495" cy="753" r="3.400" fill="#4a8cf0" stroke="#fff"/></g>
<text x="1145" y="755" textLength="11" style="fill:#e4e4e4;font-size:11px">IN</text>
<path d="M1174 756l4-3.500 4 3.500z" fill="#eee"/>
<path d="M1195 750h3l4-4v14l-4-4h-3z" fill="#eee" shape-rendering="auto"/><path d="M1204 749c2 2 2 6 0 8M1206 747c3 3 3 9 0 12" fill="none" stroke="#eee" shape-rendering="auto"/>
<path d="M1219.500 745v17" stroke="#eee" stroke-width="1.500"/><path d="M1221 746c3-1 5 1 8 0v8c-3 1-5-1-8 0z" fill="#eee"/><circle cx="1229" cy="757" r="4.500" fill="#d8232a" shape-rendering="auto"/><path d="M1227 755l4 4M1231 755l-4 4" stroke="#fff" shape-rendering="auto"/>
<g fill="#eee"><rect x="1243" y="756" width="2" height="3"/><rect x="1246" y="754" width="2" height="5"/><rect x="1249" y="752" width="2" height="7"/><rect x="1252" y="750" width="2" height="9"/><rect x="1255" y="748" width="2" height="11"/></g>
<text x="1291" y="758" textLength="27" style="fill:#f2f2f2">11:44</text>
</svg>
</body></html>
